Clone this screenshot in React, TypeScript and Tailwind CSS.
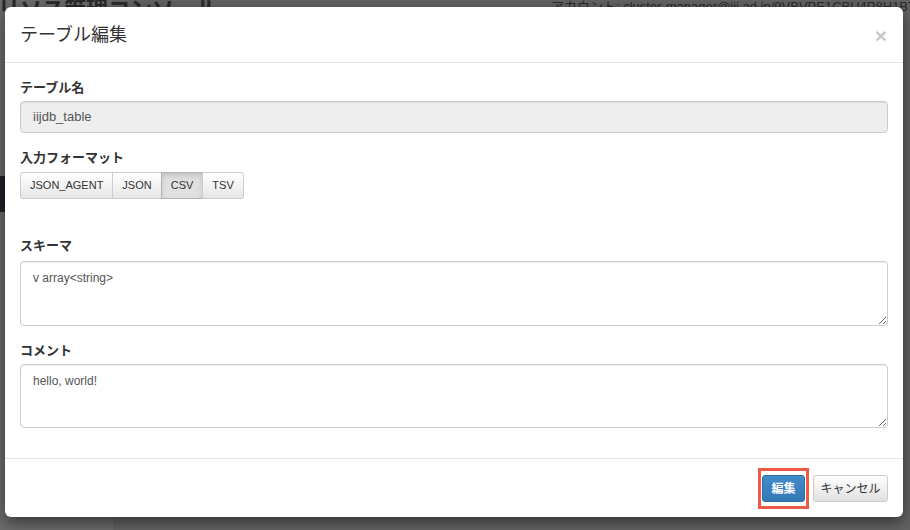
import React from 'react';

const font = { fontFamily: '"Liberation Sans", "Noto Sans CJK JP", sans-serif' };

const formats = ['JSON_AGENT', 'JSON', 'CSV', 'TSV'];

const TableEditModal = () => {
  return (
    <div className="absolute left-[5px] top-[7px] w-[898px] rounded-[6px] bg-white shadow-[0_5px_15px_rgba(0,0,0,0.5)]">
      {/* Header */}
      <div className="flex items-center justify-between border-b border-[#e5e5e5] px-[15px] pt-[15px] pb-[14px]">
        <h4 className="text-[18px] leading-[26px] text-[#333]">テーブル編集</h4>
        <button className="mr-[1px] text-[21px] font-bold leading-none text-[#c8c8c8]">×</button>
      </div>

      {/* Body */}
      <div className="px-[15px] pt-[15px] pb-[15px]">
        <div className="mb-[15px]">
          <label className="mb-[3px] block text-[13px] font-bold leading-[20px] text-[#333]">テーブル名</label>
          <div className="flex h-[32px] items-center rounded-[4px] border border-[#ccc] bg-[#eee] px-[12px] text-[13px] text-[#555] shadow-[inset_0_1px_1px_rgba(0,0,0,0.075)]">
            iijdb_table
          </div>
        </div>

        <div className="mb-[37px]">
          <label className="mb-[4px] block text-[13px] font-bold leading-[20px] text-[#333]">入力フォーマット</label>
          <div className="flex">
            {formats.map((f, i) => {
              const active = f === 'CSV';
              return (
                <button
                  key={f}
                  className={
                    (active
                      ? 'border-[#b3b3b3] bg-[#e0e0e0] shadow-[inset_0_3px_5px_rgba(0,0,0,0.125)] '
                      : 'border-[#ccc] bg-gradient-to-b from-white to-[#e6e6e6] ') +
                    (i === 0 ? 'rounded-l-[3px] ' : '-ml-px ') +
                    (i === formats.length - 1 ? 'rounded-r-[3px] ' : '') +
                    'h-[27px] border px-[9px] text-[11px] text-[#333]'
                  }
                >
                  {f}
                </button>
              );
            })}
          </div>
        </div>

        <div className="mb-[15px]">
          <label className="mb-[5px] block text-[13px] font-bold leading-[20px] text-[#333]">スキーマ</label>
          <textarea
            readOnly
            defaultValue="v array<string>"
            className="block h-[65px] w-full rounded-[4px] border border-[#ccc] px-[12px] py-[6px] text-[12px] leading-[20px] text-[#555] shadow-[inset_0_1px_1px_rgba(0,0,0,0.075)] outline-none"
          />
        </div>

        <div className="mb-[15px]">
          <label className="mb-[3px] block text-[13px] font-bold leading-[20px] text-[#333]">コメント</label>
          <textarea
            readOnly
            defaultValue="hello, world!"
            className="block h-[64px] w-full rounded-[4px] border border-[#ccc] px-[12px] py-[6px] text-[12px] leading-[20px] text-[#555] shadow-[inset_0_1px_1px_rgba(0,0,0,0.075)] outline-none"
          />
        </div>
      </div>

      {/* Footer */}
      <div className="flex justify-end gap-[8px] border-t border-[#e5e5e5] px-[15px] pt-[16px] pb-[15px]">
        <div className="relative">
          <button className="h-[27px] w-[43px] rounded-[3px] border border-[#2d6ca2] bg-gradient-to-b from-[#428bca] to-[#3278b3] text-[12px] font-bold text-white">
            編集
          </button>
          <div className="pointer-events-none absolute -top-[7px] -left-[4px] -right-[4px] -bottom-[7px] border-[3px] border-[#ee5a45]" />
        </div>
        <button className="h-[27px] w-[75px] rounded-[3px] border border-[#ccc] bg-gradient-to-b from-white to-[#e0e0e0] text-[12px] text-[#333]">
          キャンセル
        </button>
      </div>
    </div>
  );
};

const App = () => {
  return (
    <div className="relative h-[530px] w-[910px] overflow-hidden bg-[#636363]" style={font}>
      {/* Dimmed page underneath */}
      <div className="flex h-full">
        <div className="flex w-[113px] flex-col bg-[#6b6b6b]">
          <div className="-mt-[7px] ml-[-2px] whitespace-nowrap text-[22px] font-bold text-[#2a2a2a]">リソス管理コンソール</div>
          <div className="mt-[150px] h-[36px] bg-[#1f2329]" />
        </div>
        <div className="flex-1">
          <div className="flex justify-end">
            <span className="-mt-[3px] -mr-[6px] whitespace-nowrap text-[13px] text-[#2a2a2a]">
              アカウント: cluster-manager@iij.ad.jp/9VBVPE1CBU4P8H1BT
            </span>
          </div>
        </div>
      </div>

      <TableEditModal />
    </div>
  );
};

export default App;
